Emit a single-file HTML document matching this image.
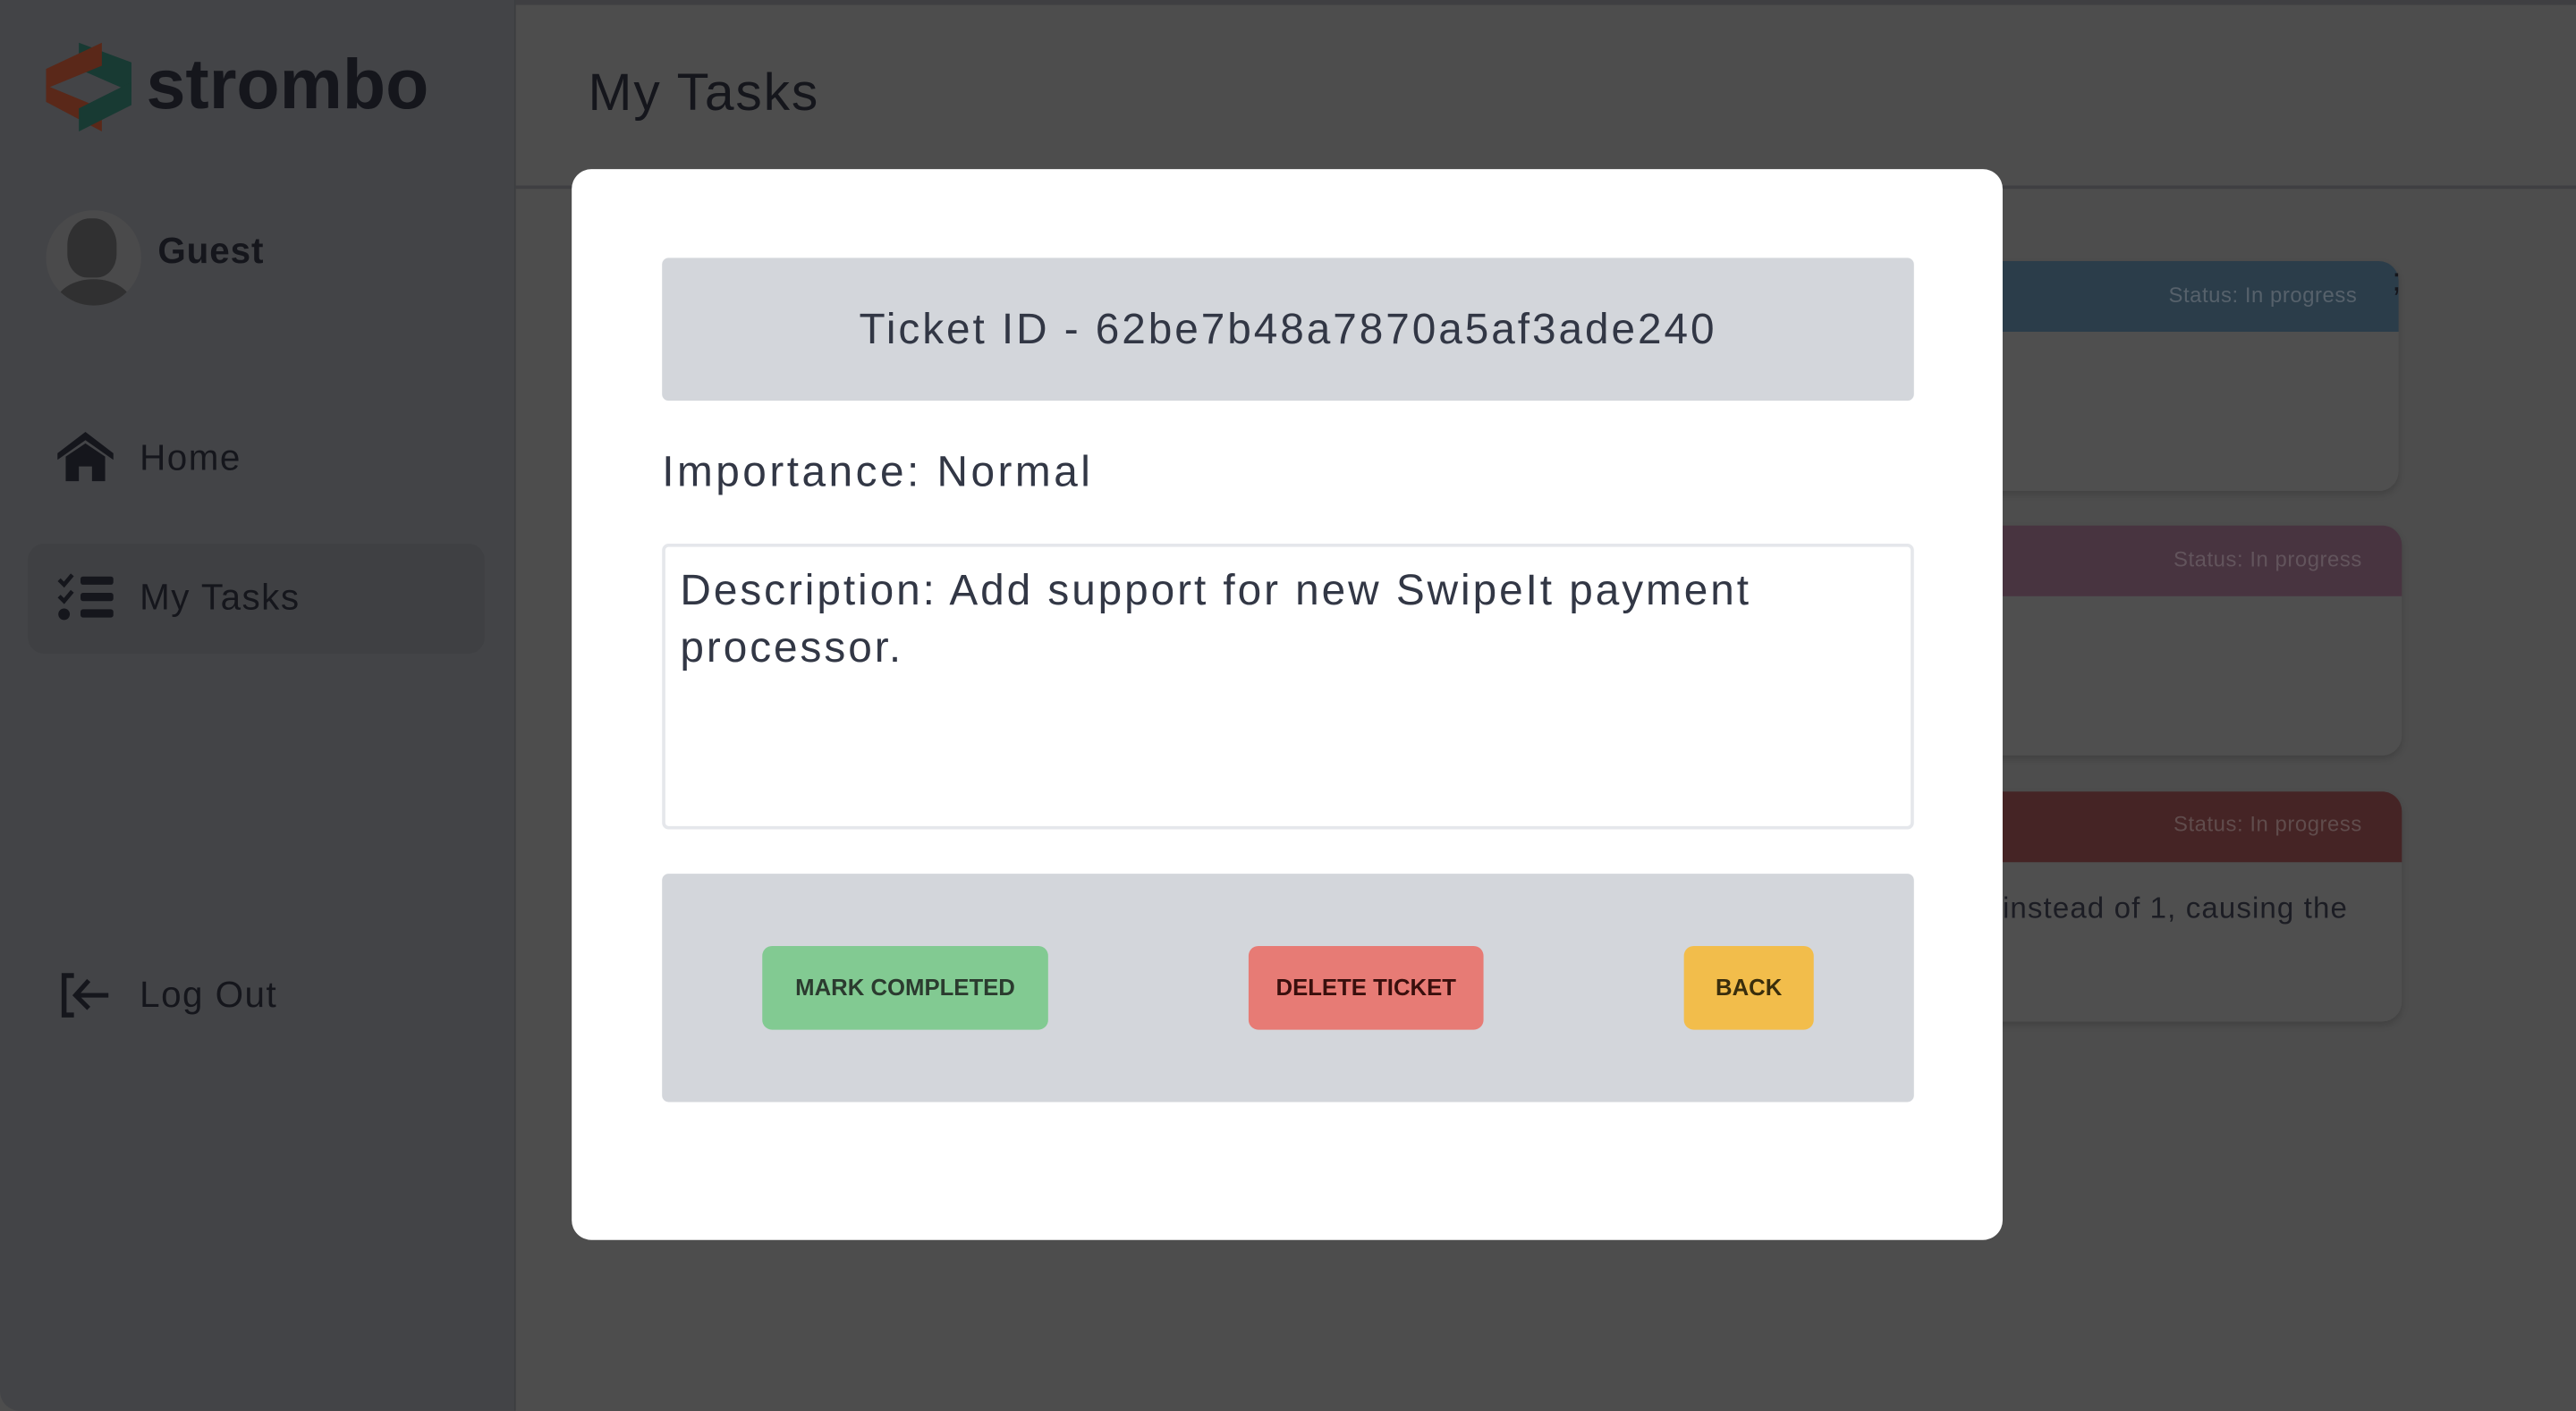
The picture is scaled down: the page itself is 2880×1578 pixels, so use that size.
<!DOCTYPE html>
<html><head><meta charset="utf-8"><style>
html,body{margin:0;padding:0;width:2880px;height:1578px;overflow:hidden;background:#4d4d4d;}
#w{position:absolute;left:0;top:0;width:1568px;height:859px;transform:scale(1.83673);transform-origin:0 0;font-family:"Liberation Sans",sans-serif;}
.a{position:absolute;}
.t{color:#15161c;}
</style></head><body><div id="w">
<div class="a" style="left:314px;top:0;width:1254px;height:859px;background:#4d4d4d"></div>
<div class="a" style="left:314px;top:0;width:1254px;height:3px;background:#3f3f42"></div>
<div class="a" style="left:314px;top:113px;width:1254px;height:2px;background:#3f3f42"></div>
<div class="a t" style="left:358px;top:38px;font-size:32px;letter-spacing:1px">My Tasks</div>
<div class="a" style="left:1100px;top:159px;width:360px;height:140px;background:#4f4f4f;border-radius:12px;box-shadow:0 2px 4px rgba(0,0,0,.15)"></div>
<div class="a" style="left:1100px;top:159px;width:360px;height:43px;background:#2b3d4a;border-radius:12px 12px 0 0"></div>
<div class="a" style="left:1320px;top:172px;font-size:13px;color:#56616b;letter-spacing:0.3px">Status: In progress</div>
<div class="a t" style="left:1456px;top:160px;font-size:20px">;</div>
<div class="a" style="left:1100px;top:320px;width:362px;height:140px;background:#4f4f4f;border-radius:12px;box-shadow:0 2px 4px rgba(0,0,0,.15)"></div>
<div class="a" style="left:1100px;top:320px;width:362px;height:43px;background:#483440;border-radius:12px 12px 0 0"></div>
<div class="a" style="left:1323px;top:333px;font-size:13px;color:#62545c;letter-spacing:0.3px">Status: In progress</div>
<div class="a" style="left:1100px;top:482px;width:362px;height:140px;background:#4f4f4f;border-radius:12px;box-shadow:0 2px 4px rgba(0,0,0,.15)"></div>
<div class="a" style="left:1100px;top:482px;width:362px;height:43px;background:#452425;border-radius:12px 12px 0 0"></div>
<div class="a" style="left:1323px;top:494px;font-size:13px;color:#604c4c;letter-spacing:0.3px">Status: In progress</div>
<div class="a t" style="left:1219px;top:543px;font-size:18px;color:#1c1d24;letter-spacing:0.6px">instead of 1, causing the</div>
<div class="a" style="left:0;top:0;width:313px;height:859px;background:#434447;border-right:1px solid #3c3d40;border-radius:0 0 0 12px"></div>
<svg class="a" style="left:28px;top:26px" width="54" height="54" viewBox="0 0 54 54">
<polygon points="20,0 52,12 52,30 20,16" fill="#183a33"/>
<polygon points="34,0 34,14 0,28 0,16" fill="#5a2819"/>
<polygon points="0,26 34,40 34,54 0,36" fill="#5a2819"/>
<polygon points="52,24 52,38 20,54 20,40" fill="#183a33"/>
</svg>
<div class="a t" style="left:89px;top:28px;font-size:43px;font-weight:bold;letter-spacing:0px">strombo</div>
<div class="a" style="left:28px;top:128px;width:58px;height:58px;border-radius:50%;background:#4a4a4b;overflow:hidden">
<div class="a" style="left:13px;top:5px;width:30px;height:36px;border-radius:45% 45% 40% 40%;background:#303031"></div>
<div class="a" style="left:6px;top:42px;width:46px;height:30px;border-radius:50% 50% 0 0;background:#303031"></div>
</div>
<div class="a t" style="left:96px;top:140px;font-size:22px;font-weight:bold;letter-spacing:0.5px">Guest</div>
<svg class="a" style="left:34px;top:262px" width="36" height="32" viewBox="0 0 36 32"><path d="M18 1 L1 14 L1 18 L18 6 L35 18 L35 14 Z" fill="#15161c"/><path d="M6 16 L18 8 L30 16 L30 31 L22 31 L22 22 L14 22 L14 31 L6 31 Z" fill="#15161c"/></svg>
<div class="a t" style="left:85px;top:266px;font-size:22px;letter-spacing:0.8px">Home</div>
<div class="a" style="left:17px;top:331px;width:278px;height:67px;background:#3f4043;border-radius:10px"></div>
<svg class="a" style="left:34px;top:348px" width="36" height="32" viewBox="0 0 36 32"><path d="M2 5 L5 8 L10 2 M2 15 L5 18 L10 12" stroke="#15161c" stroke-width="2.5" fill="none"/><circle cx="5" cy="26" r="3.5" fill="#15161c"/><rect x="15" y="3" width="20" height="5" rx="1.5" fill="#15161c"/><rect x="15" y="13" width="20" height="5" rx="1.5" fill="#15161c"/><rect x="15" y="23" width="20" height="5" rx="1.5" fill="#15161c"/></svg>
<div class="a t" style="left:85px;top:351px;font-size:22px;letter-spacing:0.8px">My Tasks</div>
<svg class="a" style="left:36px;top:592px" width="32" height="28" viewBox="0 0 32 28"><path d="M9 2 H3 V26 H9" stroke="#15161c" stroke-width="3" fill="none"/><path d="M30 14 H10 M18 5 L10 14 L18 22" stroke="#15161c" stroke-width="2.8" fill="none"/></svg>
<div class="a t" style="left:85px;top:593px;font-size:22px;letter-spacing:0.8px">Log Out</div>
<div class="a" style="left:348px;top:103px;width:871px;height:652px;background:#fff;border-radius:12px"></div>
<div class="a" style="left:403px;top:157px;width:762px;height:87px;background:#d3d6db;border-radius:4px;text-align:center;line-height:87px;font-size:26px;color:#323745;letter-spacing:1.6px">Ticket ID - 62be7b48a7870a5af3ade240</div>
<div class="a" style="left:403px;top:272px;font-size:26px;color:#323745;letter-spacing:1.9px">Importance: Normal</div>
<div class="a" style="left:403px;top:331px;width:758px;height:170px;border:2px solid #e5e7eb;border-radius:4px"></div>
<div class="a" style="left:414px;top:342px;width:740px;font-size:26px;line-height:35px;color:#323745;letter-spacing:1.6px">Description: Add support for new SwipeIt payment processor.</div>
<div class="a" style="left:403px;top:532px;width:762px;height:139px;background:#d3d6db;border-radius:4px"></div>
<div class="a" style="left:464px;top:576px;width:174px;height:51px;background:#82ca92;border-radius:6px;text-align:center;line-height:51px;font-size:14px;font-weight:bold;color:#2b3b2f">MARK COMPLETED</div>
<div class="a" style="left:760px;top:576px;width:143px;height:51px;background:#e77b75;border-radius:6px;text-align:center;line-height:51px;font-size:14px;font-weight:bold;color:#3a0f0d">DELETE TICKET</div>
<div class="a" style="left:1025px;top:576px;width:79px;height:51px;background:#f2bd4b;border-radius:6px;text-align:center;line-height:51px;font-size:14px;font-weight:bold;color:#3a2e0c">BACK</div>
</div></body></html>
